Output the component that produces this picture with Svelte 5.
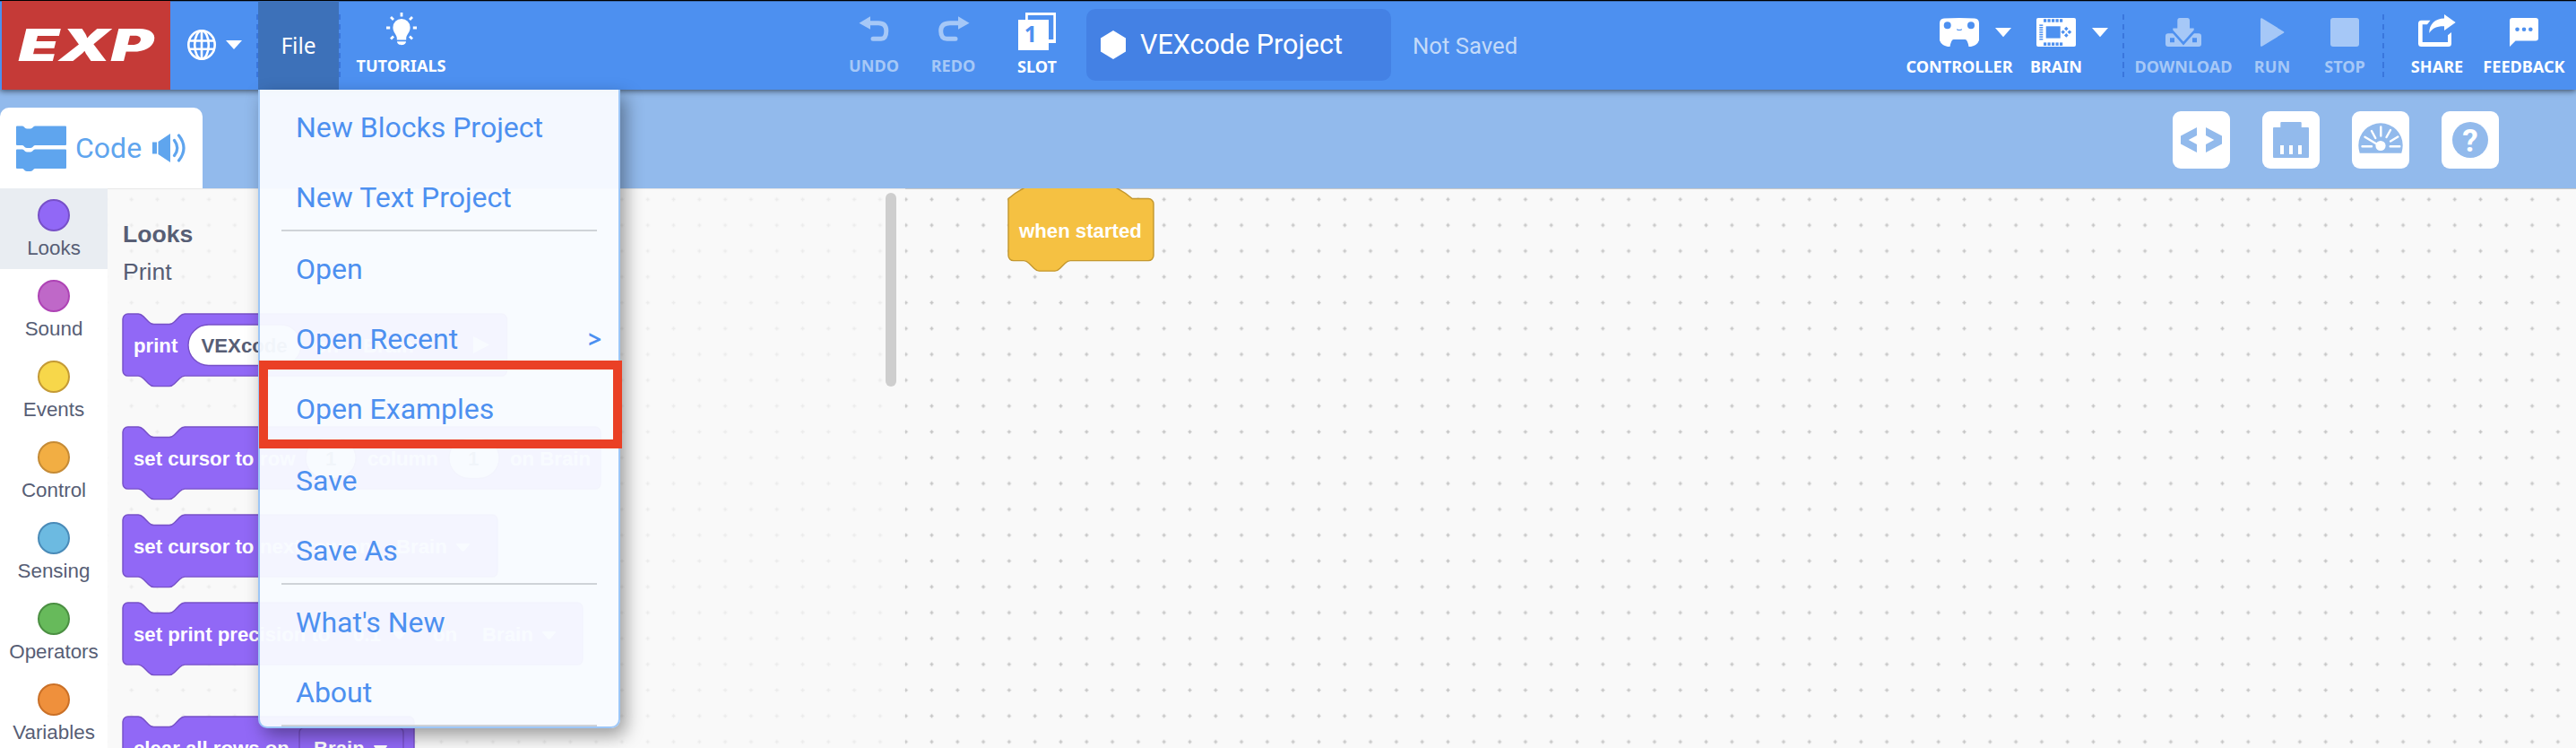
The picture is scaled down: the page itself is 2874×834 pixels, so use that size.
<script>
  const categories = [
    { name: 'Looks', fill: '#9168f6', ring: '#7750c8' },
    { name: 'Sound', fill: '#bf68c8', ring: '#ae43b5' },
    { name: 'Events', fill: '#f7d74a', ring: '#c49a35' },
    { name: 'Control', fill: '#f2ae43', ring: '#c58b36' },
    { name: 'Sensing', fill: '#6cbae1', ring: '#4a8bb8' },
    { name: 'Operators', fill: '#67ba5b', ring: '#4b8f42' },
    { name: 'Variables', fill: '#ef903c', ring: '#ca7027' }
  ];

  // Positions inside a block are in pixels from its left edge.
  const blocks = [
    {
      w: 428.5, gap: 0,
      texts: [['print', 12], ['on', 214], ['Brain', 268]],
      pills: [{ x: 73, w: 126, text: 'VEXcode', tx: 87.5 }],
      menus: [], carets: [], play: 391
    },
    {
      w: 533, gap: 56.5,
      texts: [['set cursor to', 12], ['row', 153], ['column', 273], ['on Brain', 432]],
      pills: [{ x: 204, w: 56, text: '1', tx: 226 }, { x: 364, w: 56, text: '1', tx: 385 }],
      menus: [], carets: []
    },
    {
      w: 418, gap: 27.8,
      texts: [['set cursor to', 12], ['next row on', 153], ['Brain', 305]],
      pills: [], menus: [], carets: [372]
    },
    {
      w: 513, gap: 28,
      texts: [['set print precision to', 12], ['0.1', 257], ['on', 346], ['Brain', 401]],
      pills: [], menus: [], carets: [301, 468]
    },
    {
      w: 325, gap: 57,
      texts: [['clear all rows on', 12], ['Brain', 213]],
      pills: [], menus: [{ x: 197, w: 116 }], carets: [280]
    }
  ];

  const notch = 'c2 0 3 1 4 2l4 4c1 1 2 2 4 2h12c2 0 3-1 4-2l4-4c1-1 2-2 4-2';
  const tab = 'H48c-2 0-3 1-4 2l-4 4c-1 1-2 2-4 2H24c-2 0-3-1-4-2l-4-4c-1-1-2-2-4-2H4a4 4 0 0 1-4-4z';
  const blockPath = (w) =>
    `M0 4a4 4 0 0 1 4-4h8${notch}H${w / 1.44 - 4}a4 4 0 0 1 4 4v40a4 4 0 0 1-4 4${tab}`;

  const menuItems = [
    { label: 'New Blocks Project' },
    { label: 'New Text Project', rule: true },
    { label: 'Open' },
    { label: 'Open Recent', more: true },
    { label: 'Open Examples', rule: true },
    { label: 'Save' },
    { label: 'Save As', rule: true },
    { label: "What's New" },
    { label: 'About', rule: true }
  ];
  const five = [0, 1, 2, 3, 4];
</script>

<div class="app">
  <header>
    <div class="brand">
      <svg width="188" height="100"><text x="18.500" y="68" textLength="151" lengthAdjust="spacingAndGlyphs">EXP</text></svg>
    </div>
    <div class="lang">
      <svg width="98" height="100" viewBox="190 0 98 100" fill="none" stroke="#fff" stroke-width="2.6">
        <ellipse cx="225" cy="50" rx="14.7" ry="15.7" />
        <ellipse cx="225" cy="50" rx="7.8" ry="15.7" />
        <path d="M225 34v32M210 45.5h30M210 54.8h30" />
        <path d="M252 45h18l-9 10z" fill="#fff" stroke="none" />
      </svg>
    </div>
    <button class="file">File</button>
    <div class="tool high" style="width:139px">
      <svg viewBox="-30 12 60 50" fill="#fff">
        <path d="M-5.2 44.5V42C-6 38-9.6 36-9.6 30.5a9.6 9.6 0 0 1 19.2 0C9.6 36 6 38 5.2 42v2.5zM-5 46.3H5C5 49 2 50.2 0 50.2S-5 49-5 46.3z" />
        <path d="M0 14v4.5M-17 31h4.2M17 31h-4.2M-12 19l3 3M12 19l-3 3M-12 43.5l3-3M12 43.5l-3-3" stroke="#fff" stroke-width="2.8" />
      </svg>
      <span>TUTORIALS</span>
    </div>
    <div class="tool high off" style="width:60px;margin-left:428px">
      <svg viewBox="-30 12 60 50">
        <path d="M-16.5 25.7L-4 18.2V32.8z" />
        <path d="M-5 25.8H5q8.8 0 8.8 8.7t-5.8 8.8H-1" fill="none" stroke="#a6c8f7" stroke-width="5" stroke-linecap="round" />
      </svg>
      <span>UNDO</span>
    </div>
    <div class="tool high off" style="width:53px;margin-left:32px">
      <svg viewBox="-30 12 60 50">
        <g transform="translate(1 0) scale(-1 1)">
          <path d="M-16.5 25.7L-4 18.2V32.8z" />
          <path d="M-5 25.8H5q10.3 0 10.3 8.7t-6.8 8.8H-1" fill="none" stroke="#a6c8f7" stroke-width="5" stroke-linecap="round" />
        </g>
      </svg>
      <span>REDO</span>
    </div>
    <div class="tool" style="width:48px;margin-left:43px">
      <svg viewBox="-30 12 60 50" fill="#fff">
        <path d="M-13 14H21V48H12V44H18.3V17H-10.2V24H-13z" />
        <path d="M-21 22H13V56H-21z" />
        <text class="slotnum" x="-7" y="46.7" text-anchor="middle">1</text>
      </svg>
      <span>SLOT</span>
    </div>
    <div class="project">
      <svg width="28" height="32" viewBox="0 0 28 32"><path d="M14 0l14 8.5v15L14 32 0 23.500v-15z" fill="#fff" /></svg>
      <span>VEXcode Project</span>
    </div>
    <div class="saved">Not Saved</div>

    <div class="right">
      <div class="tool" style="width:120px">
        <svg viewBox="-30 12 60 50" fill="#fff">
          <path fill-rule="evenodd" d="M-17 20.600Q0 19.400 17 20.600Q22 21 22 26V45Q20 50.500 13 52H10.500Q9 44 6.500 44H-6.500Q-9 44-10.500 52H-13Q-20 50.500-22 45V26Q-22 21-17 20.600zM-17.300 28.300a4 4 0 1 0 8 0a4 4 0 1 0-8 0zM9 28.300a4 4 0 1 0 8 0a4 4 0 1 0-8 0zM-3 32.200q3 1.600 6 0v1q-3 1.800-6 0z" />
          <path d="M40 31h18l-9 10.300z" />
        </svg>
        <span>CONTROLLER</span>
      </div>
      <div class="tool" style="width:96px">
        <svg viewBox="-30 12 60 50" fill="#fff">
          <rect x="-22" y="20" width="44" height="32" rx="2" />
          <g fill="#4d90f0">
            <rect x="-11.300" y="29.300" width="16" height="13.300" />
            {#each five as i}
              <rect x={-14 + i * 4.5} y="21.200" width="3.200" height="3.500" />
              <rect x={-14 + i * 4.5} y="47.400" width="3.200" height="3.500" />
            {/each}
            {#each [0, 1, 2, 3, 4, 5, 6] as i}
              <rect x="-18.700" y={27.4 + i * 2.6} width="4" height="1.500" />
            {/each}
            <path d="M11.300 29.800l2.300 2.300-2.300 2.300L9 32.100zM11.300 37.100l2.300 2.300-2.300 2.300L9 39.400zM7.700 33.500l2.300 2.300-2.300 2.300-2.300-2.300zM14.900 33.500l2.300 2.300-2.300 2.300-2.300-2.300z" />
          </g>
          <path d="M40 31h18l-9 10.300z" />
        </svg>
        <span>BRAIN</span>
      </div>
      <i class="dash" style="margin-left:26px"></i>
      <div class="tool off" style="width:112px;margin-left:10px">
        <svg viewBox="-30 12 60 50">
          <path fill-rule="evenodd" d="M-17 37.300H17q3 0 3 3V49q0 3-3 3H-17q-3 0-3-3V40.300q0-3 3-3zM-15 42.300v5h5v-5zM10 42.300v5h5v-5z" />
          <path d="M-12.500 33.500L0 47.500L12.500 33.500z" fill="#4d90f0" stroke="#4d90f0" stroke-width="4" />
          <path d="M-4 20H4.300Q7 20 7 23V31.500H11.700V33.500L0 46.500L-11.700 33.500V31.500H-6.700V23Q-6.700 20-4 20z" />
        </svg>
        <span>DOWNLOAD</span>
      </div>
      <div class="tool off" style="width:50px;margin-left:18px">
        <svg viewBox="-30 12 60 50"><path d="M-12 21.200L12.300 36L-12 50.800z" stroke="#a6c8f7" stroke-width="2" stroke-linejoin="round" /></svg>
        <span>RUN</span>
      </div>
      <div class="tool off" style="width:52px;margin-left:30px">
        <svg viewBox="-30 12 60 50"><rect x="-16" y="20" width="32" height="32" rx="3" /></svg>
        <span>STOP</span>
      </div>
      <i class="dash" style="margin-left:16px"></i>
      <div class="tool" style="width:62px;margin-left:28px">
        <svg viewBox="-30 12 60 50" fill="#fff">
          <path d="M-7.500 22.700H-17.500q-3.500 0-3.500 3.500V48.500q0 3.500 3.500 3.500H12.500q3.500 0 3.500-3.500V36l-4 3.200V47H-16.300V27.300H-11z" />
          <path d="M8 16L20.700 25L8 34V29.200C0 29-5 31-8.700 37C-9 27-2 20.500 8 20.500z" />
        </svg>
        <span>SHARE</span>
      </div>
      <div class="tool" style="width:92px;margin-left:20px">
        <svg viewBox="-30 12 60 50">
          <path d="M-13 20H13q3 0 3 3V42.500q0 3-3 3H-9.500L-16 52V23q0-3 3-3z" fill="#fff" />
          <g fill="#4d90f0"><circle cx="-7.500" cy="32.800" r="2.300" /><circle cx="0" cy="32.800" r="2.300" /><circle cx="7.300" cy="32.800" r="2.300" /></g>
        </svg>
        <span>FEEDBACK</span>
      </div>
    </div>
  </header>

  <div class="subbar">
    <div class="codetab">
      <svg width="56" height="51" viewBox="0 0 56 51" fill="#5fa5ee">
        <path d="M1 .5H7C9 .5 9.500 3.500 12 3.500H16C18.500 3.500 19 .5 21 .5H55Q56 .5 56 1.500V21Q56 22 55 22H21C19 22 19 25 16 25H12C9 25 9 22 7 22H1Q0 22 0 21V1.500Q0 .5 1 .5z" />
        <path transform="translate(0 26)" d="M1 .5H7C9 .5 9.500 3.500 12 3.500H16C18.500 3.500 19 .5 21 .5H55Q56 .5 56 1.500V21Q56 22 55 22H21C19 22 19 25 16 25H12C9 25 9 22 7 22H1Q0 22 0 21V1.500Q0 .5 1 .5z" />
      </svg>
      <span>Code</span>
      <svg class="ic-sound" width="38" height="34" viewBox="0 0 38 34" fill="#5fa5ee">
        <path d="M0 10.500H5V23.500H0zM6.500 10L20 1V33L6.500 24z" />
        <path d="M24.500 8.500Q31 17 24.500 25.500M29.500 3Q40.500 17 29.500 31" fill="none" stroke="#5fa5ee" stroke-width="3.200" stroke-linecap="round" />
      </svg>
    </div>
    <div class="panels">
      <button aria-label="Code viewer"><svg viewBox="0 0 64 64"><path d="M27 18v9l-9.300 5 9.300 5v9L9 36.500v-9zM37 18v9l9.300 5-9.300 5v9l18-9.500v-9z" /></svg></button>
      <button aria-label="Devices"><svg viewBox="0 0 64 64"><path fill-rule="evenodd" d="M21.300 12H42.700q1 0 1 1v5H51q1 0 1 1V51q0 1-1 1H13q-1 0-1-1V19q0-1 1-1h7.300v-5q0-1 1-1zM20 38v10h4V38zM30 38v10h4V38zM40 38v10h4V38z" /></svg></button>
      <button aria-label="Monitor">
        <svg viewBox="0 0 64 64">
          <path d="M8.700 46.700Q7.300 42 7.300 38A24.700 24.700 0 0 1 56.700 38Q56.700 42 55.300 46.700z" />
          <path d="M11.500 39.300H22M42.700 39.300H53.300M14.500 28.700L30 38M22 22l4.300 8M32.300 17.500V27.500M43 21L38.500 29M51.300 28.500L43 33.500" stroke="#fff" stroke-width="2.400" stroke-linecap="round" />
          <circle cx="32" cy="38.500" r="5.600" fill="#fff" />
        </svg>
      </button>
      <button aria-label="Help"><svg viewBox="0 0 64 64"><circle cx="32" cy="32" r="20" /><text class="q" x="32" y="45" text-anchor="middle">?</text></svg></button>
    </div>
  </div>

  <main>
    <nav>
      {#each categories as c, i}
        <div class="cat" class:selected={i === 0}>
          <span class="dot" style="background:{c.fill};border-color:{c.ring}"></span>
          <span>{c.name}</span>
        </div>
      {/each}
    </nav>

    <section class="flyout">
      <svg class="grid faint">
        <defs>
          <pattern id="gridA" x="12.300" y="-2.100" width="28.800" height="28.800" patternUnits="userSpaceOnUse">
            <path d="M12.400 14.400h4M14.400 12.400v4" stroke="#c6c6c6" stroke-width="1.500" />
          </pattern>
        </defs>
        <rect width="100%" height="100%" fill="url(#gridA)" />
      </svg>
      <h2>Looks</h2>
      <h3>Print</h3>
      <div class="stack">
        {#each blocks as b}
          <svg class="block" width={b.w + 2} height="70" style="margin-top:{b.gap}px">
            <path d={blockPath(b.w)} transform="scale(1.44)" fill="#9168f6" stroke="#7750c8" stroke-width="1" />
            {#each b.pills as p}
              <rect x={p.x} y="12" width={p.w} height="45.500" rx="22.700" fill="#fff" stroke="#7750c8" stroke-width="1.400" />
              <text x={p.tx} y="42.700" class="dark">{p.text}</text>
            {/each}
            {#each b.menus as m}
              <rect x={m.x} y="12.500" width={m.w} height="45.500" rx="5" fill="none" stroke="#7750c8" stroke-width="1.400" />
            {/each}
            {#each b.texts as [t, x]}
              <text {x} y="42.700">{t}</text>
            {/each}
            {#each b.carets as x}
              <path d="M{x} 33q0-1 1-1h13q1 0 1 1l-6 7q-1.500 1.500-3 0z" fill="#fff" />
            {/each}
            {#if b.play}<path d="M{b.play} 25l18 9.500-18 9.500z" fill="#fff" />{/if}
          </svg>
        {/each}
      </div>
      <div class="scroll"></div>
    </section>

    <section class="canvas">
      <svg class="grid">
        <defs>
          <pattern id="gridB" x="-13.700" y="-2.100" width="28.800" height="28.800" patternUnits="userSpaceOnUse">
            <path d="M12.400 14.400h4M14.400 12.400v4" stroke="#c6c6c6" stroke-width="1.700" />
          </pattern>
        </defs>
        <rect width="100%" height="100%" fill="url(#gridB)" />
      </svg>
      <svg class="hat" width="165" height="94" viewBox="-1 -11.500 165 94">
        <path transform="scale(1.44)" d="M0 0c25-22 71-22 96 0H108.500a4 4 0 0 1 4 4v40a4 4 0 0 1-4 4{tab}" fill="#f5c142" stroke="#c4982f" />
        <text x="12" y="43">when started</text>
      </svg>
    </section>
  </main>

  <div class="menu">
    {#each menuItems as m}
      <div class="item"><span>{m.label}</span>{#if m.more}<b>&gt;</b>{/if}</div>
      {#if m.rule}<hr />{/if}
    {/each}
  </div>
  <div class="highlight"></div>
</div>

<style>
  :global(body) { background: #f9f9f9; overflow: hidden; }
  .app { position: relative; width: 2874px; height: 834px; overflow: hidden; display: flex; flex-direction: column; font-family: Roboto, sans-serif; }
  button { border: 0; padding: 0; font: inherit; }
  svg { display: block; flex: none; }

  header { position: relative; z-index: 2; flex: none; box-sizing: border-box; height: 100px; padding-left: 2px; display: flex; background: #4d90f0; box-shadow: 0 1px 7px rgba(0, 0, 0, .65), inset 0 1px #000, inset 0 2px #3a6cb4; }
  .brand { width: 188px; height: 99px; margin-top: 1px; background: #c53a37; }
  .brand svg { margin-top: -1px; }
  .brand text { font: italic 900 49.500px Inter, sans-serif; fill: #fff; }
  .file { width: 90px; margin-top: 1px; background: #3d71b9; color: #fff; font: 24.500px 'Noto Sans', sans-serif; position: relative; }
  .file::before, .file::after { content: ''; position: absolute; top: 15px; height: 70px; width: 2px; background: repeating-linear-gradient(#3a76dc 0 6px, transparent 6px 10.700px); }
  .file::before { left: -2px; }
  .file::after { right: -2px; }
  .tool { display: flex; flex-direction: column; align-items: center; padding-top: 12px; height: 80px; color: #fff; font: bold 18.100px/24px 'Noto Sans', sans-serif; }
  .tool svg { width: 60px; height: 50px; overflow: visible; }
  .tool span { white-space: nowrap; }
  .tool.high span { margin-top: -1px; }
  .off { color: #a6c8f7; fill: #a6c8f7; }
  .slotnum { font: bold 25px 'Noto Sans', sans-serif; fill: #4d90f0; }
  .project { margin: 10px 0 0 31px; box-sizing: border-box; width: 340px; height: 80px; padding-left: 16px; border-radius: 10px; background: #4481e4; color: #fff; display: flex; align-items: center; gap: 16px; font-size: 30.500px; }
  .project span { margin-top: -2px; }
  .saved { margin-left: 24px; line-height: 102px; font-size: 25.700px; color: #c3daf9; }
  .right { margin-left: auto; padding-right: 12px; display: flex; }
  .dash { width: 2px; height: 70px; margin-top: 16px; background: repeating-linear-gradient(#3a76dc 0 6px, transparent 6px 10.700px); }

  .subbar { flex: none; height: 110px; background: #92baec; display: flex; justify-content: space-between; }
  .codetab { box-sizing: border-box; width: 226px; height: 90px; margin-top: 20px; background: #fff; border-radius: 10px 10px 0 0; padding: 20px 0 0 18px; display: flex; color: #5fa5ee; }
  .codetab span { margin: 6px 0 0 10px; font-size: 32px; line-height: 38px; width: 76px; }
  .ic-sound { margin: 8px 0 0 10px; }
  .panels { display: flex; gap: 36px; padding: 24px 86px 0 0; }
  .panels button { width: 64px; height: 64px; border-radius: 9px; background: #fff; }
  .panels svg { width: 64px; height: 64px; fill: #92baec; }
  .panels .q { font: bold 35px Roboto, sans-serif; fill: #fff; }

  main { flex: 1; display: flex; min-height: 0; font-family: 'Liberation Sans', sans-serif; }
  nav { width: 120px; flex: none; background: #fff; box-shadow: inset 0 1px #e6e8ec; }
  .cat { box-sizing: border-box; height: 90px; padding-top: 12px; display: flex; flex-direction: column; align-items: center; color: #575e75; font-size: 22.400px; line-height: 26px; gap: 6px; }
  .selected { background: #e9edf2; }
  .dot { box-sizing: border-box; width: 36px; height: 36px; border: 2px solid; border-radius: 50%; }
  .flyout { position: relative; width: 890px; flex: none; background: #f9f9f9; box-shadow: inset 0 1px #e8e8e8; }
  .grid { position: absolute; inset: 0; width: 100%; height: 100%; }
  .faint { opacity: .25; }
  h2, h3 { position: relative; margin: 0 0 0 17px; font-size: 26.600px; line-height: 30px; color: #575e75; }
  h2 { padding-top: 36px; }
  h3 { font-weight: 400; padding-top: 12px; }
  .stack { position: relative; margin: 31.500px 0 0 17.300px; display: flex; flex-direction: column; }
  .block { overflow: visible; }
  .block text, .hat text { font: bold 22.200px 'Liberation Sans', sans-serif; fill: #fff; }
  .block text.dark { fill: #575e75; }
  .scroll { position: absolute; left: 868px; top: 5px; width: 12px; height: 216px; border-radius: 6px; background: #cecece; }
  .canvas { position: relative; flex: 1; background: #f9f9f9; box-shadow: inset 0 1px #c8c8c8; }
  .hat { position: relative; margin-left: 114px; }

  .menu { position: absolute; z-index: 3; left: 288px; top: 100px; box-sizing: border-box; width: 404px; height: 711.500px; border: 2px solid #9cc6f7; border-top: 0; border-radius: 0 0 10px 10px; background: rgba(248, 251, 255, .96); box-shadow: 6px 8px 20px rgba(0, 0, 0, .38); overflow: hidden; color: #4d90f0; font-size: 32px; }
  .item { height: 78px; padding: 0 19px 0 40px; display: flex; justify-content: space-between; line-height: 85px; }
  .item b { font: bold 26px/85px 'Noto Sans', sans-serif; }
  hr { margin: 0 24px; height: 2px; border: 0; background: #cfd3d8; }
  .highlight { position: absolute; z-index: 4; left: 289px; top: 402px; box-sizing: border-box; width: 405px; height: 98px; border: 10px solid #ea4025; }
</style>
